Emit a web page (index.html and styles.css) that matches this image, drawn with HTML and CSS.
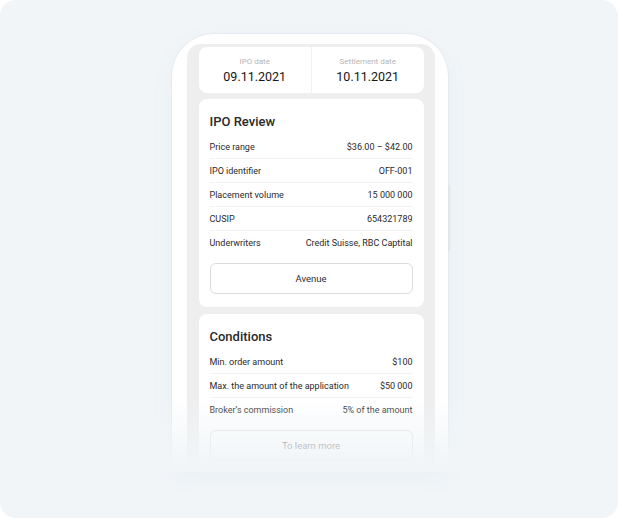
FILE: index.html
```html
<!DOCTYPE html>
<html>
<head>
<meta charset="utf-8">
<link rel="stylesheet" href="styles.css">
</head>
<body>
<div class="frame">
  <div class="phone">
    <span class="side-button"></span>
    <div class="screen">
      <div class="card dates">
        <div class="date-col">
          <div class="date-label">IPO date</div>
          <div class="date-value">09.11.2021</div>
        </div>
        <div class="date-col">
          <div class="date-label">Settlement date</div>
          <div class="date-value">10.11.2021</div>
        </div>
      </div>
      <div class="card section">
        <div class="section-title">IPO Review</div>
        <div class="rows">
          <div class="row"><span>Price range</span><span>$36.00 – $42.00</span></div>
          <div class="row"><span>IPO identifier</span><span>OFF-001</span></div>
          <div class="row"><span>Placement volume</span><span>15 000 000</span></div>
          <div class="row"><span>CUSIP</span><span>654321789</span></div>
          <div class="row"><span>Underwriters</span><span>Credit Suisse, RBC Captital</span></div>
        </div>
        <div class="btn">Avenue</div>
      </div>
      <div class="card section">
        <div class="section-title">Conditions</div>
        <div class="rows">
          <div class="row"><span>Min. order amount</span><span>$100</span></div>
          <div class="row"><span>Max. the amount of the application</span><span>$50 000</span></div>
          <div class="row"><span>Broker’s commission</span><span>5% of the amount</span></div>
        </div>
        <div class="btn">To learn more</div>
      </div>
    </div>
  </div>
  <div class="fade"></div>
</div>
</body>
</html>
```

FILE: styles.css
```css
* { box-sizing: border-box; }
html, body { margin: 0; padding: 0; background: #ffffff; }
body { font-family: Roboto, "Noto Sans", "DejaVu Sans", sans-serif; }

.frame {
  position: relative;
  width: 618px;
  height: 518px;
  border-radius: 16px;
  background: #f1f5f8;
  overflow: hidden;
  display: flex;
  justify-content: center;
  padding-top: 34px;
}

.phone {
  position: relative;
  width: 276px;
  height: 436px;
  margin-left: 1px;
  border-radius: 42px 42px 0 0;
  background: #ffffff;
  padding: 10px 13px 0 15px;
  box-shadow: 0 0 0 1px rgba(200, 210, 220, 0.25), 0 6px 24px rgba(120, 140, 160, 0.05);
}

.side-button {
  position: absolute;
  right: -2px;
  top: 151px;
  width: 1.5px;
  height: 66px;
  background: #e3e6e9;
  border-radius: 1px;
}

.screen {
  height: 100%;
  background: #eeeeee;
  border-radius: 14px 14px 0 0;
  padding: 3px 11px 0 12px;
  display: flex;
  flex-direction: column;
  gap: 6px;
  overflow: hidden;
}

.card {
  background: #ffffff;
  border-radius: 8px;
}

.dates {
  height: 46px;
  display: grid;
  grid-template-columns: 1fr 1fr;
  flex-shrink: 0;
}

.date-col {
  display: flex;
  flex-direction: column;
  align-items: center;
  padding-top: 10px;
}
.date-col + .date-col { border-left: 1px solid #f1f1f1; }

.date-label {
  font-size: 8px;
  line-height: 10px;
  color: #b6b6b6;
}
.date-value {
  margin-top: 2px;
  font-size: 12.5px;
  line-height: 16px;
  color: #161616;
  font-weight: 400;
}

.section {
  padding: 14px 11px 13px;
  flex-shrink: 0;
}
.section + .section { margin-top: 1px; }

.section-title {
  font-size: 13px;
  line-height: 18px;
  font-weight: 500;
  color: #2a2a2a;
  margin-bottom: 4px;
}

.row {
  height: 24px;
  display: flex;
  justify-content: space-between;
  align-items: center;
  font-size: 9px;
  color: #2a2a2a;
  border-bottom: 1px solid #f2f2f2;
}
.row:last-child { border-bottom: none; }

.btn {
  margin-top: 8px;
  height: 31px;
  border: 1px solid #dcdcdc;
  border-radius: 6px;
  display: flex;
  align-items: center;
  justify-content: center;
  font-size: 9.5px;
  color: #2e2e2e;
}

.fade {
  position: absolute;
  left: 0;
  right: 0;
  top: 398px;
  height: 74px;
  background: linear-gradient(to bottom, rgba(241, 245, 248, 0) 0%, rgba(241, 245, 248, 0.45) 40%, rgba(241, 245, 248, 0.9) 80%, #f1f5f8 100%);
}
```
